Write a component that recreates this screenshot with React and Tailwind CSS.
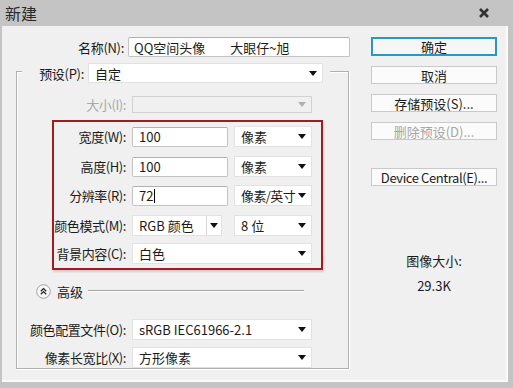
import React from "react";

const font = { fontFamily: '"Noto Sans CJK SC", "Noto Sans", sans-serif' };

function Arrow({ gray }) {
  return (
    <svg width="8" height="5" viewBox="0 0 8 5" className="shrink-0">
      <path d="M0 0 L8 0 L4 5 Z" fill={gray ? "#b0b0b0" : "#111"} />
    </svg>
  );
}

function Select({ value, w, h = 21, disabled, tight }) {
  return (
    <div
      className={`flex items-center justify-between pl-[6px] pr-[5px] border whitespace-nowrap ${
        disabled ? "bg-[#f0f0f0] border-[#d2d2d2]" : "bg-white border-[#e2e2e2]"
      }`}
      style={{ width: w, height: h }}
    >
      <span className={`leading-none ${tight ? "tracking-[-0.6px]" : ""}`}>{value}</span>
      <Arrow gray={disabled} />
    </div>
  );
}

function Input({ value, w, h = 20, caret }) {
  return (
    <div
      className="flex items-center pl-[6px] bg-white border border-[#c3c3c3] border-t-[#b0b0b0] rounded-[2px]"
      style={{ width: w, height: h }}
    >
      <span className="leading-none">{value}</span>
      {caret && <span className="w-px h-[14px] bg-black ml-px" />}
    </div>
  );
}

function Row({ label, labelW, mt, children, gray }) {
  return (
    <div className="flex items-center h-[21px]" style={{ marginTop: mt }}>
      <div
        className={`flex justify-end shrink-0 pr-[6px] leading-none whitespace-nowrap ${gray ? "text-[#a8a8a8]" : ""}`}
        style={{ width: labelW }}
      >
        <span className="tracking-[-0.4px]">{label}</span>
      </div>
      {children}
    </div>
  );
}

function Button({ children, mt, primary, disabled }) {
  return (
    <div
      className={`w-[126px] flex items-center justify-center leading-none whitespace-nowrap ${
        primary
          ? "h-[19px] border-2 border-[#2c96c2] bg-[#f6f6f6]"
          : "h-[18px] border border-[#c9c9c9] bg-[#fbfbfb]"
      } ${disabled ? "text-[#a6a6a6]" : ""}`}
      style={{ marginTop: mt }}
    >
      {children}
    </div>
  );
}

export default function App() {
  return (
    <div
      className="w-[513px] h-[388px] bg-[#c4c4c4] flex flex-col overflow-hidden text-[13px] text-[#1b1b1b]"
      style={font}
    >
      {/* title bar */}
      <div className="h-[26px] flex items-center justify-between pl-[5px] pr-[24px] shrink-0">
        <span className="text-[16px] text-[#2a2a2a] leading-none">新建</span>
        <svg width="10" height="10" viewBox="0 0 10 10">
          <path d="M1 1 L9 9 M9 1 L1 9" stroke="#333" strokeWidth="2.6" />
        </svg>
      </div>

      <div className="ml-[2px] w-[506px] h-[356px] bg-[#f0f0f0] border-r-2 border-b-2 border-[#fafafa] flex">
        {/* left column */}
        <div className="w-[355px] flex flex-col">
          <div className="flex items-center mt-[11px]">
            <div className="w-[126px] flex justify-end pr-[4px] leading-none whitespace-nowrap">
              <span className="tracking-[-0.3px]">名称(N):</span>
            </div>
            <div className="w-[222px] h-[20px] flex items-center pl-[5px] bg-white border border-[#c3c3c3] border-t-[#b0b0b0] rounded-[2px] leading-none whitespace-nowrap">
              <span>QQ空间头像</span>
              <span className="ml-[25px]">大眼仔~旭</span>
            </div>
          </div>

          {/* group box */}
          <div className="ml-[14px] mt-[14px] w-[333px] h-[298px] border border-[#b0b0b0] shadow-[1px_1px_0_#ffffff,inset_1px_1px_0_#ffffff] flex flex-col">
            <div className="ml-[5px] mt-[-9px] w-[308px] bg-[#f0f0f0] flex items-center">
              <div className="w-[62px] flex justify-end leading-none whitespace-nowrap">
                <span className="tracking-[-0.3px]">预设(P):</span>
              </div>
              <div className="ml-[4px]">
                <Select value="自定" w={235} h={20} />
              </div>
            </div>

            <Row label="大小(I):" labelW={115} mt={11} gray>
              <Select value="" w={180} h={17} disabled />
            </Row>

            {/* highlighted box */}
            <div className="ml-[35px] mt-[5px] w-[271px] h-[150px] border-2 border-[#a11c22] shadow-[1px_2px_2px_#d8c8cc] flex flex-col">
              <Row label="宽度(W):" labelW={78} mt={4}>
                <Input value="100" w={96} />
                <div className="ml-[6px]">
                  <Select value="像素" w={78} />
                </div>
              </Row>
              <Row label="高度(H):" labelW={78} mt={9}>
                <Input value="100" w={96} />
                <div className="ml-[6px]">
                  <Select value="像素" w={78} />
                </div>
              </Row>
              <Row label="分辨率(R):" labelW={78} mt={8}>
                <Input value="72" w={96} caret />
                <div className="ml-[6px]">
                  <Select value="像素/英寸" w={78} tight />
                </div>
              </Row>
              <Row label="颜色模式(M):" labelW={78} mt={9}>
                <div className="w-[90px] h-[21px] flex bg-white border border-[#e2e2e2] whitespace-nowrap">
                  <div className="flex-1 flex items-center pl-[6px] leading-none">RGB 颜色</div>
                  <div className="w-[15px] flex items-center justify-center border-l border-[#d6d6d6]">
                    <Arrow />
                  </div>
                </div>
                <div className="ml-[12px]">
                  <Select value="8 位" w={78} />
                </div>
              </Row>
              <Row label="背景内容(C):" labelW={78} mt={7}>
                <Select value="白色" w={180} />
              </Row>
            </div>

            {/* advanced */}
            <div className="flex items-center ml-[19px] mt-[14px] h-[14px]">
              <svg width="15" height="15" viewBox="0 0 15 15">
                <circle cx="7.5" cy="7.5" r="6.8" fill="#f7f7f7" stroke="#a4a4a4" />
                <path d="M4.8 7.2 L7.5 4.6 L10.2 7.2 M4.8 10.2 L7.5 7.6 L10.2 10.2" fill="none" stroke="#222" strokeWidth="1.3" />
              </svg>
              <span className="ml-[6px] leading-none">高级</span>
              <div className="ml-[5px] w-[216px] h-[2px] border-t border-[#a3a3a3] border-b border-b-white" />
            </div>

            <Row label="颜色配置文件(O):" labelW={115} mt={21}>
              <Select value="sRGB IEC61966-2.1" w={180} />
            </Row>
            <Row label="像素长宽比(X):" labelW={115} mt={7}>
              <Select value="方形像素" w={180} />
            </Row>
          </div>
        </div>

        {/* right column */}
        <div className="flex flex-col ml-[14px]">
          <Button mt={11} primary>确定</Button>
          <Button mt={10}>取消</Button>
          <Button mt={10}>存储预设(S)...</Button>
          <Button mt={10} disabled>删除预设(D)...</Button>
          <Button mt={28}>
            <span className="tracking-[-0.4px]">Device Central(E)...</span>
          </Button>
          <div className="w-[126px] flex flex-col items-center mt-[67px]">
            <div className="h-[16px] leading-[16px]">图像大小:</div>
            <div className="h-[16px] leading-[16px] mt-[9px]">29.3K</div>
          </div>
        </div>
      </div>
    </div>
  );
}
